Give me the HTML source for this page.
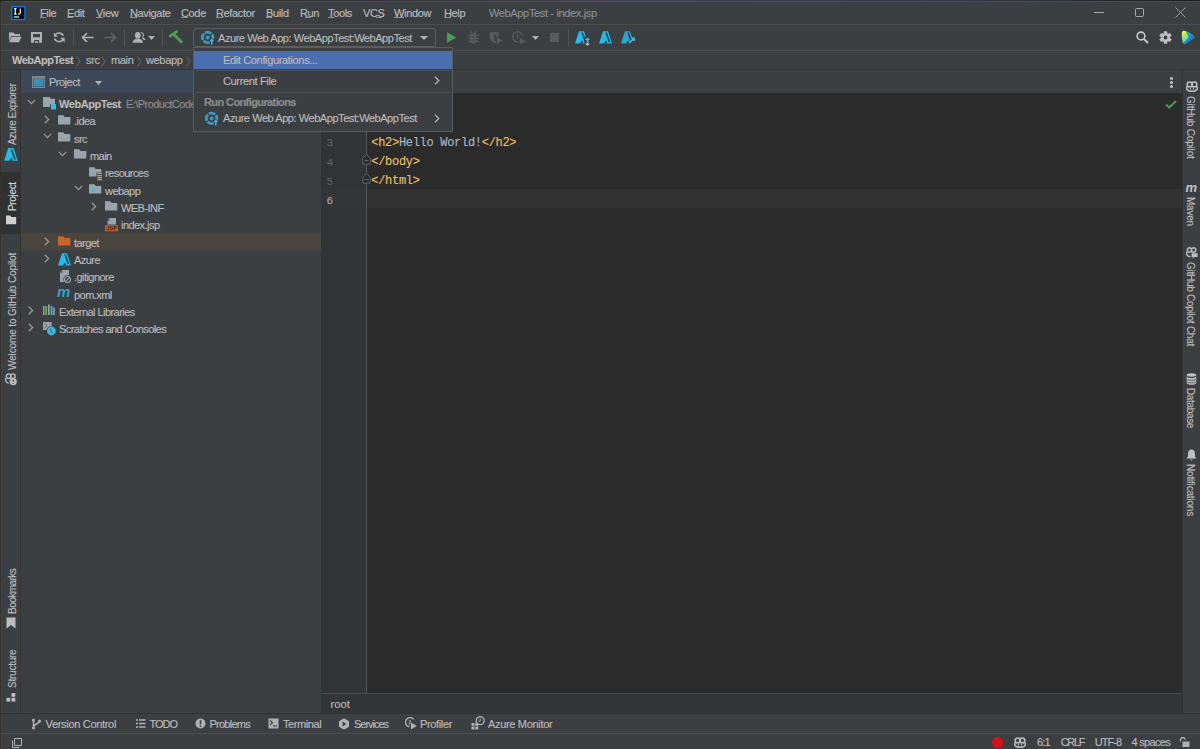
<!DOCTYPE html>
<html><head><meta charset="utf-8">
<style>
*{margin:0;padding:0;box-sizing:border-box}
html,body{width:1200px;height:749px;overflow:hidden;background:#36332d}
body{position:relative;font-family:"Liberation Sans",sans-serif;font-size:11px;color:#bbbbbb}
.a{position:absolute}
.t{position:absolute;white-space:pre;line-height:11px;letter-spacing:-0.35px;-webkit-text-stroke:0.15px currentColor}
.win{position:absolute;left:1px;top:1px;width:1220px;height:760px;background:#3c3f41;border-top-left-radius:3px;overflow:hidden;box-shadow:inset 0 1px 0 #4c4d50,inset 1px 0 0 #424242}
.hl{position:absolute;height:1px;background:#4b4c4c}
.vl{position:absolute;width:1px}
.mono{font-family:"Liberation Mono",monospace;font-size:12px;letter-spacing:-0.3px;line-height:12px}
u{text-decoration:none;border-bottom:1px solid #9a9a9a}
</style></head><body>
<div class="a" style="left:0;top:0;width:1200px;height:1px;background:linear-gradient(90deg,#23251f 0%,#2e2d2a 20%,#44404f 50%,#3a3645 80%,#1b1a20 100%)"></div>
<div class="win"></div>

<!-- menu bar separator lines -->
<div class="hl" style="left:1px;top:24px;width:1199px"></div>
<div class="hl" style="left:1px;top:50px;width:1199px"></div>
<div class="hl" style="left:1px;top:69px;width:1199px;background:#353637"></div>
<div class="hl" style="left:322px;top:70px;width:860px;background:#3a3b3c"></div>

<!-- IJ logo -->
<svg class="a" style="left:11px;top:6px" width="15" height="15" viewBox="0 0 15 15">
 <rect x="0.2" y="0" width="14.4" height="14.2" rx="1.5" fill="#1a6fe3"/>
 <rect x="1.6" y="1.4" width="11.6" height="11.4" fill="#000"/>
 <path d="M3 2.6H5.6M4.3 2.6V8M3 8H5.6" stroke="#eee" stroke-width="1.3"/>
 <path d="M9.3 2.6V6.8Q9.3 8.1 7.6 8.1H6.9" stroke="#eee" stroke-width="1.3" fill="none"/>
 <rect x="3" y="10.2" width="5.2" height="1.6" fill="#bdbdbd"/>
</svg>

<!-- menu -->
<div class="t" style="left:40px;top:8px">File</div>
<div class="t" style="left:67px;top:8px">Edit</div>
<div class="t" style="left:96px;top:8px">View</div>
<div class="t" style="left:130px;top:8px">Navigate</div>
<div class="t" style="left:181px;top:8px">Code</div>
<div class="t" style="left:216px;top:8px">Refactor</div>
<div class="t" style="left:266px;top:8px">Build</div>
<div class="t" style="left:300px;top:8px">Run</div>
<div class="t" style="left:328px;top:8px">Tools</div>
<div class="t" style="left:363px;top:8px">VCS</div>
<div class="t" style="left:394px;top:8px">Window</div>
<div class="t" style="left:444px;top:8px">Help</div>
<div class="t" style="left:489px;top:8px;color:#8c8e8f">WebAppTest - index.jsp</div>

<!-- underlines -->
<div class="a" style="left:40px;top:17px;width:6px;height:1px;background:#8e9092"></div><div class="a" style="left:67px;top:17px;width:6px;height:1px;background:#8e9092"></div><div class="a" style="left:96px;top:17px;width:7px;height:1px;background:#8e9092"></div><div class="a" style="left:130px;top:17px;width:7px;height:1px;background:#8e9092"></div><div class="a" style="left:181px;top:17px;width:7px;height:1px;background:#8e9092"></div><div class="a" style="left:216px;top:17px;width:7px;height:1px;background:#8e9092"></div><div class="a" style="left:266px;top:17px;width:6px;height:1px;background:#8e9092"></div><div class="a" style="left:305px;top:17px;width:6px;height:1px;background:#8e9092"></div><div class="a" style="left:328px;top:17px;width:6px;height:1px;background:#8e9092"></div><div class="a" style="left:376px;top:17px;width:6px;height:1px;background:#8e9092"></div><div class="a" style="left:394px;top:17px;width:10px;height:1px;background:#8e9092"></div><div class="a" style="left:444px;top:17px;width:7px;height:1px;background:#8e9092"></div>
<!-- window controls -->
<div class="a" style="left:1094px;top:12px;width:10px;height:1px;background:#a8a8a8"></div>
<div class="a" style="left:1135px;top:8px;width:9px;height:9px;border:1px solid #a8a8a8;border-radius:1.5px"></div>
<svg class="a" style="left:1175px;top:7px" width="11" height="11" viewBox="0 0 11 11"><path d="M0.5 0.5L10.5 10.5M10.5 0.5L0.5 10.5" stroke="#a8a8a8" stroke-width="0.9"/></svg>


<!-- toolbar -->
<svg class="a" style="left:8px;top:31px" width="14" height="13" viewBox="0 0 14 13">
 <path d="M1 1.5h4.5l1.2 1.5H12v2H3.2L1 10.5z" fill="#afb1b3"/>
 <path d="M3.6 5.8H13.5L11 11.2H1.2z" fill="#afb1b3"/>
</svg>
<svg class="a" style="left:31px;top:32px" width="11" height="11" viewBox="0 0 11 11">
 <path d="M0 0H11V10.8H0z M2 2V5.2H9V2z M3.2 8V10.8H8V8z" fill="#afb1b3" fill-rule="evenodd"/>
 <rect x="4" y="9.2" width="3" height="1.6" fill="#afb1b3"/>
</svg>
<svg class="a" style="left:53px;top:32px" width="12" height="11" viewBox="0 0 12 11">
 <path d="M10.4 3.8A4.6 4.4 0 0 0 2.4 2.8" stroke="#afb1b3" stroke-width="1.7" fill="none"/>
 <path d="M1.6 6.4A4.6 4.4 0 0 0 9.6 8" stroke="#afb1b3" stroke-width="1.7" fill="none"/>
 <path d="M0.8 0.6V4.8H5z" fill="#afb1b3"/>
 <path d="M11.6 10.6V5.8H7.2z" fill="#afb1b3"/>
</svg>
<div class="vl" style="left:73px;top:29px;height:17px;background:#505355"></div>
<svg class="a" style="left:81px;top:32px" width="13" height="11" viewBox="0 0 13 11">
 <path d="M12.5 5.5H2M6 1.2L1.5 5.5L6 9.8" stroke="#afb1b3" stroke-width="1.6" fill="none"/>
</svg>
<svg class="a" style="left:104px;top:32px" width="13" height="11" viewBox="0 0 13 11">
 <path d="M0.5 5.5H11M7 1.2L11.5 5.5L7 9.8" stroke="#606264" stroke-width="1.6" fill="none"/>
</svg>
<div class="vl" style="left:124px;top:29px;height:17px;background:#505355"></div>
<svg class="a" style="left:132px;top:31px" width="14" height="13" viewBox="0 0 14 13">
 <path d="M8.3 1.2a2.6 3 0 1 1 0.1 5.5c1.7 0.7 2.9 1.3 3.2 2.4h1.9c-0.3-1.4-1.7-2.4-3.4-3 1.2-1 1.2-4.3-1.8-4.9z" fill="#afb1b3"/>
 <ellipse cx="5.8" cy="4.2" rx="2.8" ry="3.2" fill="#afb1b3"/>
 <path d="M0.5 11.8c0.3-2.5 2.5-4.2 5.3-4.2s5 1.7 5.3 4.2z" fill="#afb1b3"/>
</svg>
<svg class="a" style="left:148px;top:36px" width="7" height="4" viewBox="0 0 7 4"><path d="M0 0H7L3.5 4z" fill="#afb1b3"/></svg>
<div class="vl" style="left:162px;top:29px;height:17px;background:#505355"></div>
<svg class="a" style="left:169px;top:30px" width="14" height="14" viewBox="0 0 14 14">
 <path d="M1.2 6L7.6 1.6" stroke="#499c54" stroke-width="2.9" stroke-linecap="round"/>
 <path d="M5 4.6L12.2 11.8" stroke="#499c54" stroke-width="3" stroke-linecap="round"/>
</svg>
<!-- run config combo -->
<div class="a" style="left:193px;top:28px;width:243px;height:19px;border:1px solid #5e6060;border-radius:3px"></div>
<svg class="a" style="left:200px;top:30px" width="16" height="16" viewBox="0 0 16 16">
 <circle cx="7.6" cy="7.4" r="5.2" fill="none" stroke="#3a9ac4" stroke-width="2.8" stroke-dasharray="6.5 1.1" transform="rotate(-20 7.6 7.4)"/>
 <circle cx="7.6" cy="7.4" r="2" fill="#3a9ac4"/>
 <path d="M11.8 7.8L14.8 10.8H13V14.8H10.6V10.8H8.8z" fill="#3c3f41"/>
 <path d="M11.8 8.6L14.2 10.9H12.6V14.6H11V10.9H9.4z" fill="#41b5e4"/>
</svg>
<div class="t" style="left:218px;top:33px;letter-spacing:-0.44px">Azure Web App: WebAppTest:WebAppTest</div>
<svg class="a" style="left:420px;top:36px" width="8" height="4" viewBox="0 0 8 4"><path d="M0 0H8L4 4z" fill="#afb1b3"/></svg>
<svg class="a" style="left:447px;top:32px" width="9" height="11" viewBox="0 0 9 11"><path d="M0 0L9 5.5L0 11z" fill="#499c54"/></svg>
<svg class="a" style="left:468px;top:31px" width="11" height="13" viewBox="0 0 11 13">
 <path d="M3 0.3L4.2 2.6M8 0.3L6.8 2.6" stroke="#585b5d" stroke-width="1.3"/>
 <rect x="2.6" y="2.4" width="5.8" height="10.3" rx="2.6" fill="#585b5d"/>
 <path d="M0 4.3H11M0 7.3H11M0 10.3H11" stroke="#585b5d" stroke-width="1.3"/>
 <path d="M4.3 6H6.7M4.3 9H6.7" stroke="#3c3f41" stroke-width="1"/>
</svg>
<svg class="a" style="left:489px;top:32px" width="15" height="13" viewBox="0 0 15 13">
 <path d="M0.8 0.5C3 0.5 5 0 6 -0.2C7.2 0 8.5 0.5 9.7 0.5V4.8H7V11.2C6.5 11 1 10 0.8 4.8z" fill="#585b5d"/>
 <path d="M7.7 5.2L14 8.6L7.7 12z" fill="#585b5d"/>
 <path d="M6 2.5V9.2" stroke="#3c3f41" stroke-width="1.6"/>
</svg>
<svg class="a" style="left:512px;top:31px" width="14" height="14" viewBox="0 0 14 14">
 <path d="M10.5 4.5A5 5 0 1 0 5.5 10.8" stroke="#585b5d" stroke-width="1.5" fill="none"/>
 <path d="M5.6 3.2V6.3L4.6 8" stroke="#585b5d" stroke-width="1.2" fill="none"/>
 <path d="M7.6 6.8L13.6 10.2L7.6 13.6z" fill="#585b5d"/>
</svg>
<svg class="a" style="left:532px;top:36px" width="7" height="4" viewBox="0 0 7 4"><path d="M0 0H7L3.5 4z" fill="#afb1b3"/></svg>
<div class="a" style="left:550px;top:33px;width:9px;height:9px;background:#585b5d"></div>
<div class="vl" style="left:568px;top:29px;height:17px;background:#505355"></div>
<svg class="a" style="left:575px;top:31px" width="16" height="15" viewBox="0 0 16 15">
 <path d="M4 0.2H9L13 12.4H0z" fill="#1fbdee"/><path d="M6.2 1.6H8L11.4 11.2H9.6z" fill="#3c3f41"/><path d="M4.6 12.4L7.2 9.2L8.4 12.4z" fill="#3c3f41"/>
 <path d="M9.5 5.5H16V15H9.5z" fill="#3c3f41"/>
 <path d="M12.6 6.4L15.2 9H13.6V11.8H11.6V9H10z" fill="#3fb8e6"/>
 <path d="M10.2 12.4H15L12.6 14.8z" fill="#e0e0e0"/>
</svg>
<svg class="a" style="left:599px;top:31px" width="14" height="13" viewBox="0 0 14 13">
 <path d="M4 0.2H9L13 12.4H0z" fill="#1fbdee"/><path d="M6.2 1.6H8L11.4 11.2H9.6z" fill="#3c3f41"/><path d="M4.6 12.4L7.2 9.2L8.4 12.4z" fill="#3c3f41"/>
</svg>
<svg class="a" style="left:621px;top:31px" width="14" height="13" viewBox="0 0 14 13">
 <g opacity="0.85"><path d="M4 0.2H9L13 12.4H0z" fill="#1fbdee"/><path d="M6.2 1.6H8L11.4 11.2H9.6z" fill="#3c3f41"/><path d="M4.6 12.4L7.2 9.2L8.4 12.4z" fill="#3c3f41"/></g>
 <path d="M8.8 6.8H14V13H8.8z" fill="#3c3f41"/>
 <path d="M8.5 11.8L12.8 7.5M10.2 7.3H13V10.1" stroke="#44c0ec" stroke-width="1.6" fill="none"/>
</svg>
<!-- top right -->
<svg class="a" style="left:1136px;top:31px" width="13" height="13" viewBox="0 0 13 13">
 <circle cx="5" cy="5" r="3.9" fill="none" stroke="#c9c9c9" stroke-width="1.6"/>
 <path d="M7.8 7.8L12 12" stroke="#c9c9c9" stroke-width="1.9"/>
</svg>
<svg class="a" style="left:1159px;top:31px" width="13" height="13" viewBox="0 0 13 13"><path d="M8.44 9.88 L7.71 12.48 L5.29 12.48 L4.56 9.88 L4.54 9.87 L1.93 10.54 L0.72 8.44 L2.60 6.51 L2.60 6.49 L0.72 4.56 L1.93 2.46 L4.54 3.13 L4.56 3.12 L5.29 0.52 L7.71 0.52 L8.44 3.12 L8.46 3.13 L11.07 2.46 L12.28 4.56 L10.40 6.49 L10.40 6.51 L12.28 8.44 L11.07 10.54 L8.46 9.87z" fill="#c0c0c0" stroke="#c0c0c0" stroke-width="0.6" stroke-linejoin="round"/><circle cx="6.5" cy="6.5" r="1.9" fill="#3c3f41"/></svg>
<svg class="a" style="left:1181px;top:30px" width="15" height="15" viewBox="0 0 15 15">
 <defs>
  <linearGradient id="tb1" x1="0.1" y1="0.05" x2="0.4" y2="1"><stop offset="0" stop-color="#f5f53a"/><stop offset="0.5" stop-color="#8fe08a"/><stop offset="1" stop-color="#18c8f4"/></linearGradient>
  <linearGradient id="tb2" x1="0" y1="0" x2="1" y2="1"><stop offset="0" stop-color="#21c3a8"/><stop offset="0.6" stop-color="#1b7fd8"/><stop offset="1" stop-color="#1d4fc4"/></linearGradient>
 </defs>
 <path d="M3 0.8C1.6 0.6 0.8 1.5 0.8 3.2C0.7 6.5 0.9 10 1.8 12.6C2.4 14 3.6 14.2 4.8 13.4L12.6 8.6C13.6 7.9 13.6 6.9 12.6 6C10 3.6 6.5 1.4 3 0.8z" fill="url(#tb1)"/>
 <path d="M4.6 1.3C7.5 2.2 10.3 4 12.6 6C13.6 6.9 13.6 7.9 12.6 8.6L4.8 13.4C3.9 14 3.2 13.9 2.6 13.3L7.6 7.2z" fill="url(#tb2)"/>
</svg>
<!-- breadcrumbs -->
<div class="t" style="left:12px;top:55px;font-weight:bold;letter-spacing:-0.5px">WebAppTest</div>
<div class="t" style="left:86px;top:55px">src</div>
<div class="t" style="left:111px;top:55px">main</div>
<div class="t" style="left:146px;top:55px">webapp</div>

<svg class="a" style="left:76px;top:56px" width="5" height="11" viewBox="0 0 5 11"><path d="M0.5 0.5L4 5.5L0.5 10.5" stroke="#6a6d70" stroke-width="1" fill="none"/></svg>
<svg class="a" style="left:101px;top:56px" width="5" height="11" viewBox="0 0 5 11"><path d="M0.5 0.5L4 5.5L0.5 10.5" stroke="#6a6d70" stroke-width="1" fill="none"/></svg>
<svg class="a" style="left:137px;top:56px" width="5" height="11" viewBox="0 0 5 11"><path d="M0.5 0.5L4 5.5L0.5 10.5" stroke="#6a6d70" stroke-width="1" fill="none"/></svg>
<svg class="a" style="left:186px;top:56px" width="5" height="11" viewBox="0 0 5 11"><path d="M0.5 0.5L4 5.5L0.5 10.5" stroke="#6a6d70" stroke-width="1" fill="none"/></svg>
<!-- left stripe -->
<div class="vl" style="left:20px;top:70px;height:643px;background:#323232"></div>


<!-- stripes -->
<div class="a" style="left:1px;top:172px;width:19px;height:62px;background:#2f3133"></div>
<div class="t" style="left:6.5px;top:144.5px;font-size:10px;line-height:11px;letter-spacing:-0.34px;transform:rotate(-90deg);transform-origin:0 0;color:#bbbbbb">Azure Explorer</div>
<svg class="a" style="left:4px;top:148px" width="14" height="13" viewBox="0 0 14 13"><path d="M4.2 0H9.6L13.6 12.8H0.2z" fill="#1fbdee"/><path d="M6.6 1.6H8.4L11.9 11.4H10.1z" fill="#3c3f41"/><path d="M4.9 12.8L7.6 9.5L8.8 12.8z" fill="#3c3f41"/></svg>
<div class="t" style="left:6.5px;top:210.8px;font-size:10px;line-height:11px;letter-spacing:-0.33px;transform:rotate(-90deg);transform-origin:0 0;color:#d6d6d6">Project</div>
<svg class="a" style="left:6px;top:215px" width="11" height="10" viewBox="0 0 11 10"><path d="M0 0.5H4.2L5.3 2H10.2V9.3H0z" fill="#cfcfcf"/></svg>
<div class="t" style="left:6.5px;top:370.3px;font-size:10px;line-height:11px;letter-spacing:-0.13px;transform:rotate(-90deg);transform-origin:0 0;color:#bbbbbb">Welcome to GitHub Copilot</div>
<svg class="a" style="left:5px;top:373px" width="13" height="13" viewBox="0 0 13 13"><circle cx="3.6" cy="3.2" r="2.3" stroke="#bdbdbd" stroke-width="1.4" fill="none"/><circle cx="7.8" cy="3.2" r="2.3" stroke="#bdbdbd" stroke-width="1.4" fill="none"/><path d="M1.3 5.2C0.1 6.3 0.3 9.6 3.6 10.2" stroke="#bdbdbd" stroke-width="1.4" fill="none"/><circle cx="8.2" cy="8.6" r="3.6" fill="#bdbdbd"/><path d="M8.2 6.6V8.8" stroke="#3c3f41" stroke-width="1.1"/><circle cx="8.2" cy="10.3" r="0.6" fill="#3c3f41"/></svg>
<div class="t" style="left:6.5px;top:613.7px;font-size:10px;line-height:11px;letter-spacing:-0.54px;transform:rotate(-90deg);transform-origin:0 0;color:#bbbbbb">Bookmarks</div>
<svg class="a" style="left:6px;top:617px" width="10" height="12" viewBox="0 0 10 12"><path d="M0.5 0.5H9.5V11.5L5 8L0.5 11.5z" fill="#bdbdbd"/></svg>
<div class="t" style="left:6.5px;top:688.0px;font-size:10px;line-height:11px;letter-spacing:-0.24px;transform:rotate(-90deg);transform-origin:0 0;color:#bbbbbb">Structure</div>
<svg class="a" style="left:6px;top:693px" width="10" height="9" viewBox="0 0 10 9"><rect x="5.5" y="0" width="3.8" height="3.8" fill="#bdbdbd"/><rect x="0.5" y="4.8" width="3.8" height="3.8" fill="#bdbdbd"/><rect x="5.5" y="4.8" width="3.8" height="3.8" fill="#bdbdbd"/></svg>
<svg class="a" style="left:1186px;top:81px" width="12" height="11" viewBox="0 0 12 11"><circle cx="3.7" cy="3.4" r="2.5" stroke="#c0c0c0" stroke-width="1.5" fill="none"/><circle cx="8.3" cy="3.4" r="2.5" stroke="#c0c0c0" stroke-width="1.5" fill="none"/><path d="M1.3 5.6C0.1 6.6 0.2 10.2 6 10.2S11.9 6.6 10.7 5.6" stroke="#c0c0c0" stroke-width="1.5" fill="none"/><path d="M4.6 7V8.6M7.4 7V8.6" stroke="#c0c0c0" stroke-width="1"/></svg>
<div class="t" style="left:1196px;top:96.0px;font-size:10px;line-height:11px;letter-spacing:-0.17px;transform:rotate(90deg);transform-origin:0 0;color:#bbbbbb">GitHub Copilot</div>
<div class="a" style="left:1185.5px;top:181px;font:italic bold 13px 'Liberation Sans';color:#c3c3c3;letter-spacing:-1px;line-height:13px">m</div>
<div class="t" style="left:1196px;top:197.0px;font-size:10px;line-height:11px;letter-spacing:-0.22px;transform:rotate(90deg);transform-origin:0 0;color:#bbbbbb">Maven</div>
<svg class="a" style="left:1186px;top:247px" width="12" height="12" viewBox="0 0 12 12"><circle cx="3.4" cy="3" r="2.2" stroke="#bdbdbd" stroke-width="1.4" fill="none"/><circle cx="7.6" cy="3" r="2.2" stroke="#bdbdbd" stroke-width="1.4" fill="none"/><path d="M1.2 5C0.1 6 0.2 9.4 4.5 9.8" stroke="#bdbdbd" stroke-width="1.4" fill="none"/><path d="M5.6 6.2H11.6V10H8.6L7 11.6V10H5.6z" fill="#bdbdbd"/></svg>
<div class="t" style="left:1196px;top:262.0px;font-size:10px;line-height:11px;letter-spacing:-0.26px;transform:rotate(90deg);transform-origin:0 0;color:#bbbbbb">GitHub Copilot Chat</div>
<svg class="a" style="left:1186px;top:373px" width="11" height="12" viewBox="0 0 11 12"><ellipse cx="5.5" cy="2" rx="4.8" ry="1.7" fill="#c0c0c0"/><path d="M0.7 3.2V10C0.7 11 3 11.8 5.5 11.8S10.3 11 10.3 10V3.2C10.3 4.2 8 5 5.5 5S0.7 4.2 0.7 3.2z" fill="#c0c0c0"/><path d="M0.7 6.5C1.5 7.6 9.5 7.6 10.3 6.5M0.7 9C1.5 10.1 9.5 10.1 10.3 9" stroke="#3c3f41" stroke-width="0.8" fill="none"/></svg>
<div class="t" style="left:1196px;top:388.0px;font-size:10px;line-height:11px;letter-spacing:-0.35px;transform:rotate(90deg);transform-origin:0 0;color:#bbbbbb">Database</div>
<svg class="a" style="left:1186px;top:449px" width="11" height="12" viewBox="0 0 11 12"><path d="M5.5 0.5C3 0.5 2 2.5 2 5V7.5L0.5 9.5H10.5L9 7.5V5C9 2.5 8 0.5 5.5 0.5z" fill="#c0c0c0"/><path d="M4 10.5H7L5.5 11.8z" fill="#c0c0c0"/></svg>
<div class="t" style="left:1196px;top:464.0px;font-size:10px;line-height:11px;letter-spacing:-0.19px;transform:rotate(90deg);transform-origin:0 0;color:#bbbbbb">Notifications</div>
<!-- project panel header -->
<div class="a" style="left:21px;top:70px;width:300px;height:23px;background:#3c4857"></div>
<div class="t" style="left:49px;top:77px;letter-spacing:-0.5px">Project</div>
<svg class="a" style="left:32px;top:76px" width="13" height="12" viewBox="0 0 13 12"><rect x="0.5" y="0.5" width="12" height="11" fill="none" stroke="#7f878e" stroke-width="1"/><rect x="0.5" y="0.5" width="12" height="2.2" fill="#7f878e"/><rect x="1.5" y="3" width="10" height="7.5" fill="#3b8dba"/></svg>
<svg class="a" style="left:95px;top:81px" width="7" height="4" viewBox="0 0 7 4"><path d="M0 0H7L3.5 4z" fill="#b4b6b8"/></svg>



<!-- project tree -->
<style>.tr{letter-spacing:-0.55px}</style>
<div class="a" style="left:21px;top:233px;width:300px;height:17px;background:#4a463d"></div>
<svg class="a" style="left:27px;top:99px" width="9" height="6" viewBox="0 0 9 6"><path d="M0.8 0.8L4.5 4.6L8.2 0.8" stroke="#9c9ea0" stroke-width="1.2" fill="none"/></svg>
<svg class="a" style="left:43px;top:97px" width="14" height="14" viewBox="0 0 14 14"><path d="M0 0H6.6L7.6 1.8H12V7H7V10H0z" fill="#9aa4ac"/><rect x="7.8" y="7" width="5.2" height="5.5" fill="#40b6e0"/></svg>
<div class="t tr" style="left:59px;top:98.6px;font-weight:bold;letter-spacing:-0.45px">WebAppTest</div>
<div class="t tr" style="left:126px;top:98.6px;color:#8c8e90">E:\ProductCode\WebAppTest</div>
<svg class="a" style="left:44px;top:115px" width="6" height="9" viewBox="0 0 6 9"><path d="M0.8 0.8L4.6 4.5L0.8 8.2" stroke="#9c9ea0" stroke-width="1.2" fill="none"/></svg>
<svg class="a" style="left:58px;top:115px" width="16" height="14" viewBox="0 0 16 14"><path d="M0 0.3H5.4L6.6 2H12.3V9.6H0z" fill="#9aa4ac"/></svg>
<div class="t tr" style="left:74px;top:115.6px;">.idea</div>
<svg class="a" style="left:43px;top:133px" width="9" height="6" viewBox="0 0 9 6"><path d="M0.8 0.8L4.5 4.6L8.2 0.8" stroke="#9c9ea0" stroke-width="1.2" fill="none"/></svg>
<svg class="a" style="left:58px;top:132px" width="16" height="14" viewBox="0 0 16 14"><path d="M0 0.3H5.4L6.6 2H12.3V9.6H0z" fill="#9aa4ac"/></svg>
<div class="t tr" style="left:74px;top:133.6px;">src</div>
<svg class="a" style="left:58px;top:151px" width="9" height="6" viewBox="0 0 9 6"><path d="M0.8 0.8L4.5 4.6L8.2 0.8" stroke="#9c9ea0" stroke-width="1.2" fill="none"/></svg>
<svg class="a" style="left:74px;top:149px" width="16" height="14" viewBox="0 0 16 14"><path d="M0 0.3H5.4L6.6 2H12.3V9.6H0z" fill="#9aa4ac"/></svg>
<div class="t tr" style="left:90px;top:150.6px;">main</div>
<svg class="a" style="left:89px;top:167px" width="16" height="14" viewBox="0 0 16 14"><path d="M0 0.3H5.4L6.6 2H12.3V9.6H0z" fill="#9aa4ac"/><rect x="7.5" y="5.5" width="6" height="7" fill="#3c3f41"/><path d="M8.3 6.5H13M8.3 8.6H13M8.3 10.7H13M8.3 12.6H13" stroke="#d5a84a" stroke-width="1.2"/></svg>
<div class="t tr" style="left:105px;top:167.6px;">resources</div>
<svg class="a" style="left:74px;top:185px" width="9" height="6" viewBox="0 0 9 6"><path d="M0.8 0.8L4.5 4.6L8.2 0.8" stroke="#9c9ea0" stroke-width="1.2" fill="none"/></svg>
<svg class="a" style="left:89px;top:184px" width="16" height="14" viewBox="0 0 16 14"><path d="M0 0.3H5.4L6.6 2H12.3V9.6H0z" fill="#9aa4ac"/><circle cx="4.3" cy="6.3" r="2" fill="#40b6e0"/></svg>
<div class="t tr" style="left:105px;top:185.6px;">webapp</div>
<svg class="a" style="left:91px;top:202px" width="6" height="9" viewBox="0 0 6 9"><path d="M0.8 0.8L4.6 4.5L0.8 8.2" stroke="#9c9ea0" stroke-width="1.2" fill="none"/></svg>
<svg class="a" style="left:105px;top:201px" width="16" height="14" viewBox="0 0 16 14"><path d="M0 0.3H5.4L6.6 2H12.3V9.6H0z" fill="#9aa4ac"/></svg>
<div class="t tr" style="left:121px;top:202.6px;">WEB-INF</div>
<svg class="a" style="left:105px;top:217px" width="14" height="15" viewBox="0 0 14 15"><path d="M4.5 1H11V7.5H2.5V3z" fill="#9aa4ac"/><path d="M3.8 1.8V3.6H2.2" stroke="#3c3f41" stroke-width="0.8" fill="none"/><rect x="0" y="8" width="13" height="6.3" fill="#c35a24"/><text x="6.5" y="13.3" font-family="Liberation Sans" font-size="5.6" fill="#3a2a20" text-anchor="middle" font-weight="bold">JSP</text></svg>
<div class="t tr" style="left:121px;top:219.6px;">index.jsp</div>
<svg class="a" style="left:44px;top:237px" width="6" height="9" viewBox="0 0 6 9"><path d="M0.8 0.8L4.6 4.5L0.8 8.2" stroke="#9c9ea0" stroke-width="1.2" fill="none"/></svg>
<svg class="a" style="left:58px;top:236px" width="16" height="14" viewBox="0 0 16 14"><path d="M0 0.3H5.4L6.6 2H12.3V9.6H0z" fill="#c9652b"/></svg>
<div class="t tr" style="left:74px;top:237.6px;">target</div>
<svg class="a" style="left:44px;top:254px" width="6" height="9" viewBox="0 0 6 9"><path d="M0.8 0.8L4.6 4.5L0.8 8.2" stroke="#9c9ea0" stroke-width="1.2" fill="none"/></svg>
<svg class="a" style="left:58px;top:253px" width="14" height="13" viewBox="0 0 14 13"><path d="M4 0.2H9L13 12.4H0z" fill="#1fbdee"/><path d="M6.2 1.6H8L11.4 11.2H9.6z" fill="#3c3f41"/><path d="M4.6 12.4L7.2 9.2L8.4 12.4z" fill="#3c3f41"/></svg>
<div class="t tr" style="left:74px;top:254.6px;">Azure</div>
<svg class="a" style="left:60px;top:270px" width="12" height="14" viewBox="0 0 12 14"><path d="M2.5 0H9V12H0V2.5z" fill="#9aa4ac"/><path d="M2 0.8V2.8H0.6" stroke="#3c3f41" stroke-width="0.8" fill="none"/><circle cx="7.5" cy="9.5" r="4.2" fill="#3c3f41"/><circle cx="7.5" cy="9.5" r="3" fill="none" stroke="#9aa4ac" stroke-width="1.1"/><path d="M5.6 11.4L9.4 7.6" stroke="#9aa4ac" stroke-width="1.1"/></svg>
<div class="t tr" style="left:74px;top:271.6px;">.gitignore</div>
<div class="a" style="left:57px;top:284px;font:italic bold 15px 'Liberation Sans';color:#3a9fc6;letter-spacing:-1.2px;line-height:15px">m</div>
<div class="t tr" style="left:74px;top:289.6px;">pom.xml</div>
<svg class="a" style="left:28px;top:306px" width="6" height="9" viewBox="0 0 6 9"><path d="M0.8 0.8L4.6 4.5L0.8 8.2" stroke="#9c9ea0" stroke-width="1.2" fill="none"/></svg>
<svg class="a" style="left:42px;top:304px" width="14" height="12" viewBox="0 0 14 12"><rect x="1" y="2" width="1.4" height="9" fill="#9aa4ac"/><rect x="3.3" y="2" width="1.8" height="9" fill="#62b543"/><rect x="6" y="0.5" width="1.6" height="10.5" fill="#9aa4ac"/><rect x="8.6" y="2" width="1.8" height="9" fill="#40b6e0"/><rect x="11.2" y="3.5" width="1.6" height="7.5" fill="#9aa4ac"/></svg>
<div class="t tr" style="left:59px;top:306.6px;">External Libraries</div>
<svg class="a" style="left:28px;top:323px" width="6" height="9" viewBox="0 0 6 9"><path d="M0.8 0.8L4.6 4.5L0.8 8.2" stroke="#9c9ea0" stroke-width="1.2" fill="none"/></svg>
<svg class="a" style="left:42px;top:321px" width="15" height="15" viewBox="0 0 15 15"><rect x="1" y="1" width="8.6" height="8" fill="#9aa4ac"/><path d="M2.5 2.5L5 4.8L2.5 7" stroke="#5e6468" stroke-width="0.9" fill="none"/><circle cx="9.4" cy="10" r="5" fill="#3c3f41"/><circle cx="9.4" cy="10" r="4.4" fill="#40b6e0"/><path d="M9 7.5V10.2L10.5 11.8" stroke="#2b5f73" stroke-width="0.9" fill="none"/></svg>
<div class="t tr" style="left:59px;top:323.6px;">Scratches and Consoles</div>
<!-- editor -->
<div class="a" style="left:321px;top:70px;width:860px;height:23px;background:#3c3f41"></div>
<div class="a" style="left:321px;top:93px;width:46px;height:600px;background:#313335"></div>
<div class="a" style="left:367px;top:93px;width:815px;height:600px;background:#2b2b2b"></div>
<div class="vl" style="left:321px;top:70px;height:643px;background:#323232"></div>


<!-- code -->
<div class="a" style="left:321px;top:189px;width:46px;height:19px;background:#333537"></div>
<div class="a" style="left:367px;top:189px;width:815px;height:19px;background:#323232"></div>
<div class="vl" style="left:366px;top:93px;height:600px;background:#555759"></div>
<svg class="a" style="left:361px;top:154px" width="11" height="11" viewBox="0 0 11 11"><path d="M1.8 10.2V4.2L5.5 0.8L9.2 4.2V10.2z" fill="#2b2b2b" stroke="#5f6163" stroke-width="1"/><path d="M3.6 6.6H7.4" stroke="#6a6c6e" stroke-width="1"/></svg>
<svg class="a" style="left:361px;top:173px" width="11" height="11" viewBox="0 0 11 11"><path d="M1.8 10.2V4.2L5.5 0.8L9.2 4.2V10.2z" fill="#2b2b2b" stroke="#5f6163" stroke-width="1"/><path d="M3.6 6.6H7.4" stroke="#6a6c6e" stroke-width="1"/></svg>
<div class="t mono" style="left:326.5px;top:99.0px;color:#5c5f62;font-size:11px;letter-spacing:0">1</div>
<div class="t mono" style="left:371.3px;top:98.4px"><span style="color:#e8bf6a">&lt;html&gt;</span></div>
<div class="t mono" style="left:326.5px;top:118.2px;color:#5c5f62;font-size:11px;letter-spacing:0">2</div>
<div class="t mono" style="left:371.3px;top:117.6px"><span style="color:#e8bf6a">&lt;body&gt;</span></div>
<div class="t mono" style="left:326.5px;top:137.4px;color:#5c5f62;font-size:11px;letter-spacing:0">3</div>
<div class="t mono" style="left:371.3px;top:136.8px"><span style="color:#e8bf6a">&lt;h2&gt;</span><span style="color:#a9b7c6">Hello World!</span><span style="color:#e8bf6a">&lt;/h2&gt;</span></div>
<div class="t mono" style="left:326.5px;top:156.6px;color:#5c5f62;font-size:11px;letter-spacing:0">4</div>
<div class="t mono" style="left:371.3px;top:156.0px"><span style="color:#e8bf6a">&lt;/body&gt;</span></div>
<div class="t mono" style="left:326.5px;top:175.8px;color:#5c5f62;font-size:11px;letter-spacing:0">5</div>
<div class="t mono" style="left:371.3px;top:175.2px"><span style="color:#e8bf6a">&lt;/html&gt;</span></div>
<div class="t mono" style="left:326.5px;top:195.0px;color:#a4a3a3;font-size:11px;letter-spacing:0">6</div>
<svg class="a" style="left:1165px;top:100px" width="12" height="9" viewBox="0 0 12 9"><path d="M1 4.5L4.2 7.5L11 1" stroke="#499c54" stroke-width="2" fill="none"/></svg>
<div class="a" style="left:1170px;top:77px;width:3px;height:3px;border-radius:2px;background:#c0c0c0;box-shadow:0 4px 0 #c0c0c0,0 8px 0 #c0c0c0"></div>
<!-- editor breadcrumbs bar -->
<div class="a" style="left:321px;top:693px;width:861px;height:20px;background:#323436"></div>
<div class="hl" style="left:321px;top:693px;width:861px;background:#484a4c"></div>
<div class="t" style="left:330.5px;top:699px;letter-spacing:0.1px">root</div>

<!-- right stripe -->
<div class="vl" style="left:1182px;top:70px;height:643px;background:#323232"></div>

<!-- bottom bar lines -->
<div class="hl" style="left:1px;top:713px;width:1199px;background:#323232"></div>
<div class="hl" style="left:1px;top:733px;width:1199px;background:#4b4c4c"></div>



<!-- bottom -->
<svg class="a" style="left:31px;top:718px" width="11" height="12" viewBox="0 0 11 12"><circle cx="2.5" cy="2" r="1.5" fill="#afb1b3"/><circle cx="2.5" cy="10" r="1.5" fill="#afb1b3"/><circle cx="8.5" cy="3" r="1.5" fill="#afb1b3"/><path d="M2.5 2V10M8.5 3C8.5 6 2.5 6 2.5 9" stroke="#afb1b3" stroke-width="1.5" fill="none"/></svg>
<div class="t" style="left:45.5px;top:719px;letter-spacing:-0.31px;color:#bbbbbb">Version Control</div>
<svg class="a" style="left:136px;top:719px" width="10" height="9" viewBox="0 0 10 9"><path d="M0 1H2M0 4.5H2M0 8H2M3 1H9.5M3 4.5H9.5M3 8H9.5" stroke="#afb1b3" stroke-width="1.5"/></svg>
<div class="t" style="left:149.4px;top:719px;letter-spacing:-1.00px;color:#bbbbbb">TODO</div>
<svg class="a" style="left:195px;top:718px" width="11" height="11" viewBox="0 0 11 11"><circle cx="5.5" cy="5.5" r="5" fill="#afb1b3"/><path d="M5.5 2.2V6.3" stroke="#3c3f41" stroke-width="1.6"/><circle cx="5.5" cy="8.2" r="0.9" fill="#3c3f41"/></svg>
<div class="t" style="left:209.5px;top:719px;letter-spacing:-0.75px;color:#bbbbbb">Problems</div>
<svg class="a" style="left:268px;top:718px" width="11" height="11" viewBox="0 0 11 11"><rect x="0.5" y="0.5" width="10" height="10" fill="#afb1b3"/><path d="M2 2.5L4.5 4.8L2 7" stroke="#3c3f41" stroke-width="1.1" fill="none"/><path d="M5 8H9" stroke="#3c3f41" stroke-width="1.1"/></svg>
<div class="t" style="left:283px;top:719px;letter-spacing:-0.41px;color:#bbbbbb">Terminal</div>
<svg class="a" style="left:338px;top:718px" width="12" height="12" viewBox="0 0 12 12"><path d="M6 0.3L11 3.2V8.8L6 11.7L1 8.8V3.2z" fill="#afb1b3"/><path d="M4.6 3.5L8.4 6L4.6 8.5z" fill="#3c3f41"/></svg>
<div class="t" style="left:354px;top:719px;letter-spacing:-1.03px;color:#bbbbbb">Services</div>
<svg class="a" style="left:405px;top:717px" width="12" height="13" viewBox="0 0 12 13"><path d="M8.5 2.2A4.6 4.6 0 1 0 4.5 9.8" stroke="#afb1b3" stroke-width="1.4" fill="none"/><path d="M5 3V6L4 7.5" stroke="#afb1b3" stroke-width="1.1" fill="none"/><path d="M6 5.5L11.8 9L6 12.5z" fill="#afb1b3"/></svg>
<div class="t" style="left:420px;top:719px;letter-spacing:-0.35px;color:#bbbbbb">Profiler</div>
<svg class="a" style="left:471px;top:716px" width="14" height="14" viewBox="0 0 14 14"><rect x="0.5" y="7" width="3" height="2.8" fill="#afb1b3"/><rect x="0.5" y="10.5" width="3" height="3" fill="#afb1b3"/><rect x="4.3" y="10.5" width="3" height="3" fill="#afb1b3"/><rect x="4.3" y="7" width="3" height="2.8" fill="#afb1b3"/><circle cx="9.2" cy="4.6" r="4" fill="#3c3f41" stroke="#afb1b3" stroke-width="1.3"/><path d="M9.2 2.4V5.2H7.8" stroke="#afb1b3" stroke-width="1" fill="none"/></svg>
<div class="t" style="left:488px;top:719px;letter-spacing:-0.32px;color:#bbbbbb">Azure Monitor</div>
<svg class="a" style="left:11px;top:737px" width="12" height="12" viewBox="0 0 12 12"><path d="M3.5 1.5H10.5V8.5H3.5z" fill="none" stroke="#afb1b3" stroke-width="1"/><path d="M1.5 3.5V10.5H8.5" fill="none" stroke="#afb1b3" stroke-width="1"/></svg>
<div class="a" style="left:992px;top:737px;width:11px;height:11px;border-radius:50%;background:#d8101a"></div>
<svg class="a" style="left:1014px;top:737px" width="12" height="11" viewBox="0 0 12 11"><circle cx="3.7" cy="3.4" r="2.5" stroke="#c0c0c0" stroke-width="1.5" fill="none"/><circle cx="8.3" cy="3.4" r="2.5" stroke="#c0c0c0" stroke-width="1.5" fill="none"/><path d="M1.3 5.6C0.1 6.6 0.2 10.2 6 10.2S11.9 6.6 10.7 5.6" stroke="#c0c0c0" stroke-width="1.5" fill="none"/><path d="M4.6 7V8.6M7.4 7V8.6" stroke="#c0c0c0" stroke-width="1"/></svg>
<div class="t" style="left:1037px;top:737px;letter-spacing:-0.87px;color:#bbbbbb">6:1</div>
<div class="t" style="left:1060.7px;top:737px;letter-spacing:-1.30px;color:#bbbbbb">CRLF</div>
<div class="t" style="left:1094.7px;top:737px;letter-spacing:-0.92px;color:#bbbbbb">UTF-8</div>
<div class="t" style="left:1131.4px;top:737px;letter-spacing:-0.68px;color:#bbbbbb">4 spaces</div>
<svg class="a" style="left:1179px;top:737px" width="11" height="10" viewBox="0 0 11 10"><path d="M1.5 4.5V2.8A2.3 2.3 0 0 1 6.1 2.8" stroke="#afb1b3" stroke-width="1.3" fill="none"/><rect x="3.5" y="4.5" width="7" height="5.5" fill="#afb1b3"/></svg>
<!-- popup -->
<div class="a" style="left:193px;top:47px;width:260px;height:85px;background:#3c3f41;border:1px solid #5a5d5f"></div>
<div class="a" style="left:194px;top:51px;width:258px;height:18px;background:#4b6eaf"></div>
<div class="hl" style="left:196px;top:70px;width:254px;background:#4f5254"></div>
<div class="hl" style="left:196px;top:92px;width:254px;background:#4f5254"></div>
<div class="t" style="left:223px;top:55px">Edit Configurations...</div>
<div class="t" style="left:223px;top:76px">Current File</div>
<svg class="a" style="left:434px;top:76px" width="6" height="9" viewBox="0 0 6 9"><path d="M1 0.8L4.8 4.5L1 8.2" stroke="#afb1b3" stroke-width="1.3" fill="none"/></svg>
<div class="t" style="left:204px;top:97px;font-weight:bold;color:#8b8d8f;letter-spacing:-0.6px">Run Configurations</div>
<svg class="a" style="left:204px;top:111px" width="16" height="16" viewBox="0 0 16 16">
 <circle cx="7.6" cy="7.4" r="5.2" fill="none" stroke="#3a9ac4" stroke-width="2.8" stroke-dasharray="6.5 1.1" transform="rotate(-20 7.6 7.4)"/>
 <circle cx="7.6" cy="7.4" r="2" fill="#3a9ac4"/>
 <path d="M11.8 7.8L14.8 10.8H13V14.8H10.6V10.8H8.8z" fill="#3c3f41"/>
 <path d="M11.8 8.6L14.2 10.9H12.6V14.6H11V10.9H9.4z" fill="#41b5e4"/>
</svg>
<div class="t" style="left:223px;top:113px;letter-spacing:-0.44px">Azure Web App: WebAppTest:WebAppTest</div>
<svg class="a" style="left:434px;top:114px" width="6" height="9" viewBox="0 0 6 9"><path d="M1 0.8L4.8 4.5L1 8.2" stroke="#afb1b3" stroke-width="1.3" fill="none"/></svg>

</body></html>
